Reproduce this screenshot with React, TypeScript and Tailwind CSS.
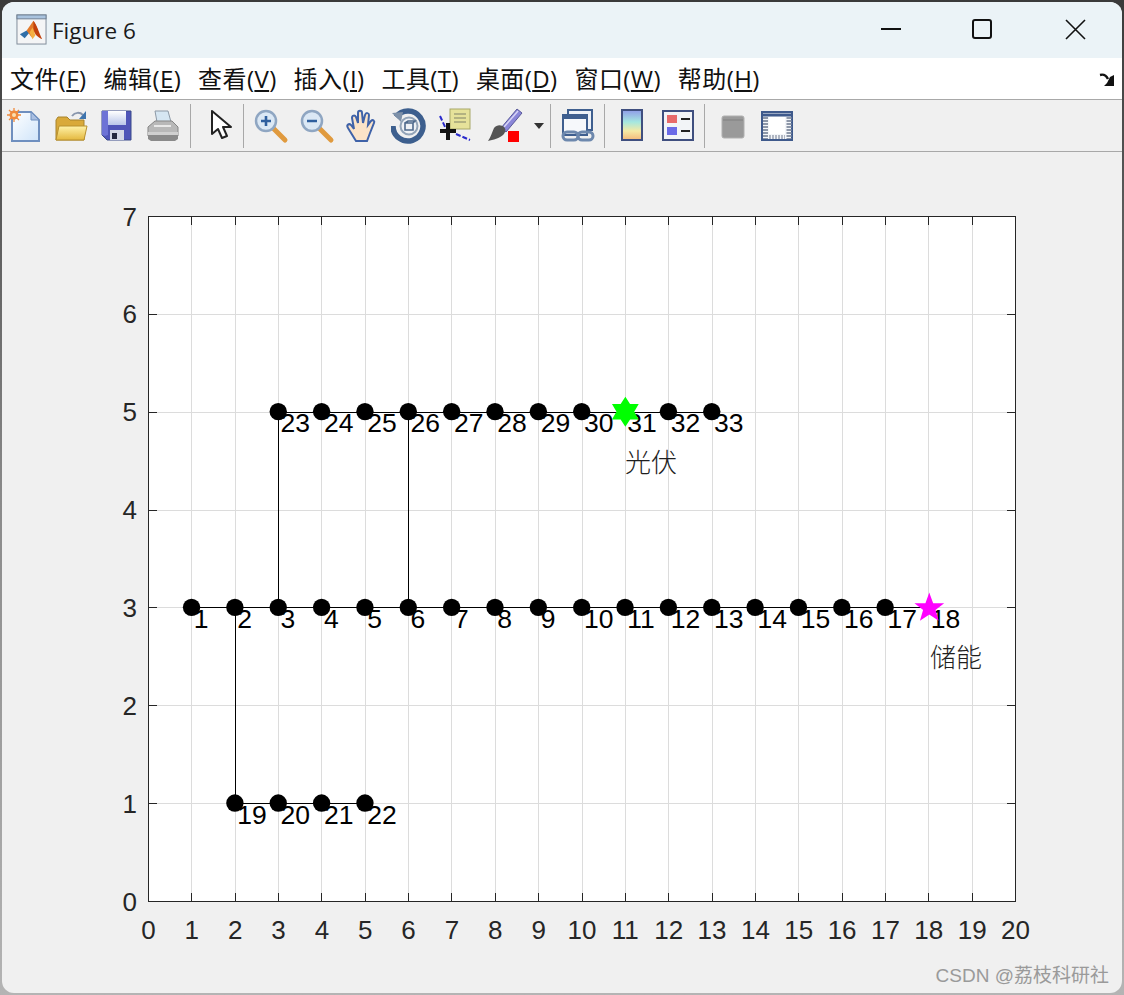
import type { ReactNode } from "react";

const menus = [
  ["文件", "F"],
  ["编辑", "E"],
  ["查看", "V"],
  ["插入", "I"],
  ["工具", "T"],
  ["桌面", "D"],
  ["窗口", "W"],
  ["帮助", "H"],
];

// plot area in window pixels
const left = 148.5;
const right = 1015.5;
const top = 216.5;
const bottom = 901.5;
const px = (x: number) => left + (x * (right - left)) / 20;
const py = (y: number) => bottom - (y * (bottom - top)) / 7;
const snap = (v: number) => Math.floor(v) + 0.5;

const xTicks = Array.from({ length: 21 }, (_, i) => i);
const yTicks = Array.from({ length: 8 }, (_, i) => i);

const nodes: [number, number, number][] = [
  ...Array.from({ length: 18 }, (_, i): [number, number, number] => [i + 1, 3, i + 1]),
  [2, 1, 19],
  [3, 1, 20],
  [4, 1, 21],
  [5, 1, 22],
  ...Array.from({ length: 11 }, (_, i): [number, number, number] => [i + 3, 5, i + 23]),
];

const lines = [
  [1, 3, 18, 3],
  [2, 3, 2, 1],
  [2, 1, 5, 1],
  [3, 3, 3, 5],
  [6, 3, 6, 5],
  [3, 5, 13, 5],
];

function Sep({ className }: { className: string }) {
  return <div className={`w-px h-[44px] bg-[#a8a8a8] ${className}`} />;
}

function Tool({ children, className = "" }: { children: ReactNode; className?: string }) {
  return (
    <div className={`w-[46px] h-[44px] flex items-center justify-center ${className}`}>
      <svg width="36" height="36" viewBox="0 0 36 36">
        {children}
      </svg>
    </div>
  );
}

function MatlabIcon() {
  return (
    <svg width="31" height="31" viewBox="0 0 32 32" className="shrink-0">
      <rect x="1" y="1" width="30" height="30" fill="#f4f5f6" stroke="#7f8b99" />
      <rect x="1" y="1" width="30" height="4" fill="#a9c3de" stroke="#6f7f92" />
      <path d="M4 21l7-4 3 2-5 6z" fill="#2f6ea8" />
      <path d="M11 17l7-10 4 8-6 9z" fill="#e2792a" />
      <path d="M18 7c3 3 6 13 9 19-3-1-5-3-7-5l-2-6z" fill="#c2410c" />
      <path d="M14 19l3-5 3 8-3 4z" fill="#f5b041" />
    </svg>
  );
}

export default function App() {
  return (
    <div className="w-[1124px] h-[995px] pt-[2px] px-[2px] pb-[2px] bg-linear-to-b from-[#3a3a3a] via-[#8a8a8a] to-[#b4b4b4]">
      <div className="relative w-full h-full flex flex-col rounded-[12px] overflow-hidden bg-[#f0f0f0]">
        {/* title bar */}
        <div className="h-[56px] shrink-0 bg-[#ebf3f7] flex items-center pl-[14px] pb-[2px]">
          <MatlabIcon />
          <span className="ml-[5px] mt-[3px] text-[22.5px] text-[#1a1a1a] font-['Open_Sans',sans-serif]">Figure 6</span>
          <div className="ml-auto flex items-center h-full">
            <svg width="20" height="20" viewBox="0 0 20 20" className="mr-[71px]">
              <path d="M0 10h20" stroke="#111" strokeWidth="2" />
            </svg>
            <svg width="20" height="20" viewBox="0 0 20 20" className="mr-[73px]">
              <rect x="1" y="1" width="18" height="18" rx="2" fill="none" stroke="#111" strokeWidth="2" />
            </svg>
            <svg width="21" height="21" viewBox="0 0 21 21" className="mr-[36px]">
              <path d="M1 1l19 19M20 1L1 20" stroke="#111" strokeWidth="1.6" />
            </svg>
          </div>
        </div>

        {/* menu bar */}
        <div className="h-[42px] shrink-0 bg-white border-b border-[#a8a8a8] flex items-center pl-[8px] pr-[7px] gap-[17px] text-[24px] tracking-[0.4px] text-[#111] font-['Open_Sans','Noto_Sans_CJK_SC',sans-serif]">
          {menus.map(([name, key]) => (
            <span key={key} className="whitespace-nowrap leading-none">
              {name}(<u>{key}</u>)
            </span>
          ))}
          <svg width="16" height="14" viewBox="0 0 16 14" className="ml-auto mt-[2px]">
            <path d="M1 2c4-1 6 0 8 4" fill="none" stroke="#111" strokeWidth="2.4" />
            <path d="M15 2v11H5l3-3 3-6z" fill="#111" />
          </svg>
        </div>

        {/* toolbar */}
        <div className="h-[52px] shrink-0 border-b border-[#a8a8a8] flex items-center">
          <Tool>
            <defs>
              <linearGradient id="pg" x1="0" y1="0" x2="1" y2="1">
                <stop offset="0" stopColor="#ffffff" />
                <stop offset="1" stopColor="#cfe4fa" />
              </linearGradient>
            </defs>
            <path d="M5 4h19l8 8v21H5z" fill="url(#pg)" stroke="#6f8fbf" strokeWidth="2" />
            <path d="M24 4v8h8z" fill="#a9bfe2" stroke="#6f8fbf" />
            <circle cx="7" cy="7" r="4.5" fill="#f08a3c" />
            <path d="M7 0v14M0 7h14M2 2l10 10M12 2L2 12" stroke="#f08a3c" strokeWidth="1.3" />
            <circle cx="7" cy="7" r="2" fill="#fbe0b0" />
          </Tool>
          <Tool>
            <defs>
              <linearGradient id="fd" x1="0" y1="0" x2="0" y2="1">
                <stop offset="0" stopColor="#fff2a8" />
                <stop offset="1" stopColor="#e4b83e" />
              </linearGradient>
            </defs>
            <path d="M3 32V12l2-3h9l3 3h14v20z" fill="#d9a93a" stroke="#a8842c" />
            <path d="M3 32l3-14h28l-3 14z" fill="url(#fd)" stroke="#b8902f" />
            <path d="M19 8c3-4 8-4 11-1" fill="none" stroke="#8a97ad" strokeWidth="2" />
            <path d="M33 3v8h-7z" fill="#3f74ad" />
          </Tool>
          <Tool>
            <defs>
              <linearGradient id="sv" x1="0" y1="0" x2="0" y2="1">
                <stop offset="0" stopColor="#ffffff" />
                <stop offset="1" stopColor="#b9c6ea" />
              </linearGradient>
            </defs>
            <path d="M3 3h29v29H8l-5-5z" fill="#4f55b8" stroke="#3a4a8a" />
            <path d="M3 3h6v24l-3 1-3-1z" fill="#6d73d6" />
            <rect x="9" y="3" width="18" height="14" fill="url(#sv)" />
            <rect x="11" y="22" width="14" height="10" fill="#d5d8e6" />
            <rect x="13" y="25" width="5" height="6" fill="#25283f" />
          </Tool>
          <Tool>
            <path d="M10 3h13l3 11H12z" fill="#d6e6f2" stroke="#8d99a6" />
            <path d="M3 19l7-6h17l6 6v9H3z" fill="#b8b8b8" stroke="#858585" />
            <path d="M3 24h30v3H3z" fill="#d0d0d0" />
            <path d="M3 27h30v4l-3 2H6l-3-2z" fill="#8a8a8a" />
            <path d="M9 18h17" stroke="#e8e8e8" strokeWidth="2" />
          </Tool>
          <Sep className="ml-[4px] mr-[6px]" />
          <Tool>
            <path
              d="M10 3v23l6-5 4 9 5-2-4-9h8z"
              fill="#fff"
              stroke="#222"
              strokeWidth="2"
              strokeLinejoin="round"
            />
          </Tool>
          <Sep className="mr-[4px]" />
          <Tool>
            <path d="M20 20l12 12" stroke="#e09a3e" strokeWidth="5" strokeLinecap="round" />
            <circle cx="13" cy="13" r="10" fill="#dbe8f5" stroke="#8fa6c2" strokeWidth="2.5" />
            <path d="M8 13h10M13 8v10" stroke="#2f5f9e" strokeWidth="2.6" />
          </Tool>
          <Tool>
            <path d="M20 20l12 12" stroke="#e09a3e" strokeWidth="5" strokeLinecap="round" />
            <circle cx="13" cy="13" r="10" fill="#dbe8f5" stroke="#8fa6c2" strokeWidth="2.5" />
            <path d="M8 13h10" stroke="#2f5f9e" strokeWidth="2.6" />
          </Tool>
          <Tool>
            <path
              d="M11 33L3 20c-2-3 1-5 3-3l3 4-2-11c0-3 3-3 4-1l2 6 0-10c0-3 4-3 4 0l1 10 2-8c1-3 4-2 4 0l-1 10 3-4c2-2 4 0 3 2l-4 10-3 8z"
              fill="#fbe3c8"
              stroke="#3f62a8"
              strokeWidth="2"
            />
          </Tool>
          <Tool>
            <path d="M5 9a15 15 0 1 1-3 9" fill="none" stroke="#3d5f8e" strokeWidth="5.5" />
            <path d="M1 5l11-1-2 10z" fill="#7d90a8" />
            <circle cx="18" cy="18" r="8.5" fill="#eef1f5" stroke="#93a4b8" strokeWidth="2" />
            <path d="M14 15h8v7h-8zM14 15l3-2h7l-2 2" fill="none" stroke="#4f6a8c" strokeWidth="1.6" />
          </Tool>
          <Tool>
            <path d="M3 8l6 13M19 26l14 6" stroke="#2a2acc" strokeWidth="2" strokeDasharray="5 2" fill="none" />
            <rect x="13" y="1" width="20" height="20" fill="#e6e29a" stroke="#a8a868" />
            <path d="M17 6h12M17 10h12M17 14h12" stroke="#a3a37a" strokeWidth="1.5" />
            <path d="M11 15v17M3 23h16" stroke="#111" strokeWidth="4" />
          </Tool>
          <Tool className="ml-[4px]">
            <path d="M14 20L30 1l5 4-16 19z" fill="#8a86d8" stroke="#5a5a9a" />
            <path d="M17 19L31 3" stroke="#d8d6f5" strokeWidth="1.5" />
            <path d="M7 20c3-4 8-3 10-1s2 5-1 8c-3 3-10 5-15 6 3-4 4-9 6-13z" fill="#555" />
            <rect x="21" y="23" width="11" height="11" fill="#f00" />
          </Tool>
          <div className="w-[20px] ml-px flex justify-center">
            <svg width="10" height="6" viewBox="0 0 10 6">
              <path d="M0 0h10L5 6z" fill="#333" />
            </svg>
          </div>
          <Sep className="ml-[1px] mr-[4px]" />
          <Tool>
            <rect x="8" y="2" width="24" height="20" fill="#eef2f8" stroke="#3f5f8f" strokeWidth="2" />
            <rect x="3" y="7" width="24" height="20" fill="#f6f8fb" stroke="#3f5f8f" strokeWidth="2" />
            <path d="M3 7h24v4H3z" fill="#3f5f8f" />
            <rect x="3" y="24" width="15" height="8" rx="4" fill="none" stroke="#6d88ad" strokeWidth="3" />
            <rect x="18" y="24" width="15" height="8" rx="4" fill="none" stroke="#6d88ad" strokeWidth="3" />
          </Tool>
          <Sep className="ml-[3px] mr-[4px]" />
          <Tool>
            <defs>
              <linearGradient id="cb" x1="0" y1="0" x2="0" y2="1">
                <stop offset="0" stopColor="#8f9be8" />
                <stop offset="0.4" stopColor="#a5e8e0" />
                <stop offset="0.7" stopColor="#f5eaa5" />
                <stop offset="1" stopColor="#f3b87a" />
              </linearGradient>
            </defs>
            <rect x="8" y="2" width="20" height="30" fill="url(#cb)" stroke="#3f4f7f" strokeWidth="2" />
          </Tool>
          <Tool>
            <rect x="3" y="3" width="30" height="29" fill="#f2f4f7" stroke="#3f4f7f" strokeWidth="2" />
            <rect x="7" y="7" width="10" height="8" fill="#e86a6a" />
            <rect x="7" y="19" width="10" height="8" fill="#6a6ae8" />
            <path d="M21 11h9M21 23h9" stroke="#222" strokeWidth="2" />
          </Tool>
          <Sep className="ml-[3px] mr-[5px]" />
          <Tool>
            <rect x="7" y="8" width="22" height="22" rx="2" fill="#9a9a9a" stroke="#b0b0b0" />
            <path d="M8 12h20" stroke="#808080" strokeWidth="1" />
          </Tool>
          <Tool className="ml-[-2px]">
            <rect x="3" y="4" width="30" height="28" fill="#f4f6f9" stroke="#3f5a8c" strokeWidth="2" />
            <path d="M3 7h30" stroke="#3f5a8c" strokeWidth="3" />
            <path d="M6.500 9v22M30 9v22" stroke="#8d97a8" strokeWidth="5" strokeDasharray="2 1" />
            <rect x="10" y="9" width="16" height="17" fill="#fff" />
            <path d="M10 29h16" stroke="#b0b6c2" strokeWidth="4" strokeDasharray="2 1" />
          </Tool>
        </div>

        {/* figure canvas */}
        <div className="flex-1 min-h-0">
          <svg viewBox="2 152 1120 841" className="block w-full h-full font-['Liberation_Sans',sans-serif]">
            <rect x={left} y={top} width={right - left} height={bottom - top} fill="#fff" />
            {xTicks.slice(1, -1).map((t) => (
              <path key={t} d={`M${snap(px(t))} ${top}V${bottom}`} stroke="#dcdcdc" />
            ))}
            {yTicks.slice(1, -1).map((t) => (
              <path key={t} d={`M${left} ${snap(py(t))}H${right}`} stroke="#dcdcdc" />
            ))}
            {xTicks.slice(1, -1).map((t) => {
              const x = snap(px(t));
              return <path key={t} d={`M${x} ${top}v8.5M${x} ${bottom}v-8.5`} stroke="#262626" />;
            })}
            {yTicks.slice(1, -1).map((t) => {
              const y = snap(py(t));
              return <path key={t} d={`M${left} ${y}h8.5M${right} ${y}h-8.5`} stroke="#262626" />;
            })}
            <rect x={left} y={top} width={right - left} height={bottom - top} fill="none" stroke="#262626" />
            {xTicks.map((t) => (
              <text key={t} x={px(t)} y={939} textAnchor="middle" className="text-[26px] fill-[#262626]">
                {t}
              </text>
            ))}
            {yTicks.map((t) => (
              <text key={t} x={137} y={py(t) + 9} textAnchor="end" className="text-[26px] fill-[#262626]">
                {t}
              </text>
            ))}
            {lines.map(([x1, y1, x2, y2], i) => (
              <line
                key={i}
                x1={snap(px(x1))}
                y1={snap(py(y1))}
                x2={snap(px(x2))}
                y2={snap(py(y2))}
                stroke="#000"
              />
            ))}
            {nodes.map(([x, y, id]) =>
              id === 18 || id === 31 ? null : <circle key={id} cx={px(x) - 0.3} cy={py(y) - 0.6} r={8.7} fill="#000" />,
            )}
            {nodes.map(([x, y, id]) => (
              <text key={id} x={px(x) + 2} y={py(y) + 20} className="text-[26.5px] fill-black">
                {id}
              </text>
            ))}
            {/* hexagram at node 31 */}
            <path
              transform={`translate(${px(11)} ${py(5) - 0.5})`}
              d="M0-13.5 4.2-7 12-7 8 0 12 7 4.200 7 0 13.500-4.200 7-12 7-8 0-12-7-4.200-7z"
              fill="#00ff00"
              stroke="#00ff00"
              strokeWidth="1.6"
            />
            {/* pentagram at node 18 */}
            <path
              transform={`translate(${px(18) + 0.5} ${py(3)})`}
              d="M0-13 3.300-4 12.600-4 5.300 1.800 8 11 0 5.600-8 11-5.300 1.800-12.600-4-3.300-4z"
              fill="#ff00ff"
              stroke="#ff00ff"
              strokeWidth="1.6"
            />
            <text x={625} y={472} className="text-[26px] fill-[#1f1f1f] font-light font-['Noto_Sans_CJK_SC',sans-serif]">
              光伏
            </text>
            <text x={930} y={667} className="text-[26px] fill-[#1f1f1f] font-light font-['Noto_Sans_CJK_SC',sans-serif]">
              储能
            </text>
          </svg>
        </div>

        {/* watermark */}
        <span className="absolute right-[13px] bottom-[4px] text-[19px] leading-[26px] text-[#9a9a9a] font-['Liberation_Sans','Noto_Sans_CJK_SC',sans-serif]">
          CSDN @荔枝科研社
        </span>
      </div>
    </div>
  );
}
